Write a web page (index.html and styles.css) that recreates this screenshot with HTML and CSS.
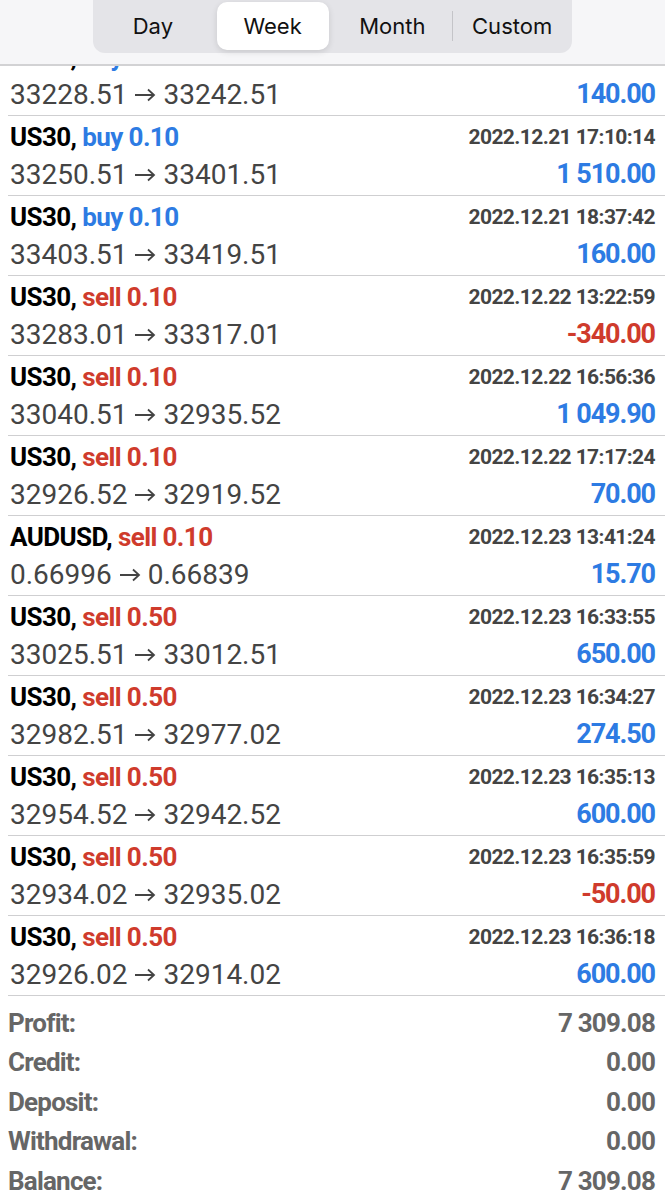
FILE: index.html
```html
<!DOCTYPE html>
<html lang="en">
<head>
    <meta charset="UTF-8">
    <meta name="viewport" content="width=device-width, initial-scale=1.0">
    <title>History</title>
    <link rel="stylesheet" href="styles.css">
</head>
<body>

    <div class="topbar">
        <div class="segments">
            <div class="seg">Day</div>
            <div class="seg active">Week</div>
            <div class="seg">Month</div>
            <div class="seg divided">Custom</div>
        </div>
    </div>

    <div class="deals" id="deals"></div>

    <div class="summary">
        <div class="sum-row"><span>Profit:</span><span>7 309.08</span></div>
        <div class="sum-row"><span>Credit:</span><span>0.00</span></div>
        <div class="sum-row"><span>Deposit:</span><span>0.00</span></div>
        <div class="sum-row"><span>Withdrawal:</span><span>0.00</span></div>
        <div class="sum-row"><span>Balance:</span><span>7 309.08</span></div>
    </div>

    <script>
        const deals = [
            ['US30', 'buy', '0.10', '2022.12.21 15:02:41', '33228.51', '33242.51', '140.00'],
            ['US30', 'buy', '0.10', '2022.12.21 17:10:14', '33250.51', '33401.51', '1 510.00'],
            ['US30', 'buy', '0.10', '2022.12.21 18:37:42', '33403.51', '33419.51', '160.00'],
            ['US30', 'sell', '0.10', '2022.12.22 13:22:59', '33283.01', '33317.01', '-340.00'],
            ['US30', 'sell', '0.10', '2022.12.22 16:56:36', '33040.51', '32935.52', '1 049.90'],
            ['US30', 'sell', '0.10', '2022.12.22 17:17:24', '32926.52', '32919.52', '70.00'],
            ['AUDUSD', 'sell', '0.10', '2022.12.23 13:41:24', '0.66996', '0.66839', '15.70'],
            ['US30', 'sell', '0.50', '2022.12.23 16:33:55', '33025.51', '33012.51', '650.00'],
            ['US30', 'sell', '0.50', '2022.12.23 16:34:27', '32982.51', '32977.02', '274.50'],
            ['US30', 'sell', '0.50', '2022.12.23 16:35:13', '32954.52', '32942.52', '600.00'],
            ['US30', 'sell', '0.50', '2022.12.23 16:35:59', '32934.02', '32935.02', '-50.00'],
            ['US30', 'sell', '0.50', '2022.12.23 16:36:18', '32926.02', '32914.02', '600.00']
        ];

        const arrow = '<svg class="arrow" width="22" height="14" viewBox="0 0 22 14">' +
            '<path d="M1 7 H20 M14 1.5 L20 7 L14 12.5" fill="none" stroke="#444" stroke-width="1.8"/></svg>';

        const list = document.getElementById('deals');
        list.innerHTML = deals.map(d => {
            const loss = d[6].startsWith('-') ? ' loss' : '';
            return `<div class="deal">
                <div class="line"><span class="sym">${d[0]}, <span class="${d[1]}">${d[1]} ${d[2]}</span></span><span class="time">${d[3]}</span></div>
                <div class="line"><span class="price">${d[4]} ${arrow} ${d[5]}</span><span class="amount${loss}">${d[6]}</span></div>
            </div>`;
        }).join('');
    </script>

</body>
</html>
```

FILE: styles.css
```css
body {
    margin: 0;
    background-color: #fff;
    font-family: 'Roboto', 'Liberation Sans', sans-serif;
    width: 665px;
    height: 1200px;
    overflow: hidden;
    position: relative;
}

/* header sits over the scrolled list */
.topbar {
    position: absolute;
    top: 0;
    left: 0;
    right: 0;
    height: 64px;
    background-color: #f6f6f8;
    border-bottom: 2px solid #d2d2d4;
    z-index: 2;
}

.segments {
    display: flex;
    width: 479px;
    height: 54px;
    margin: -1px 0 0 93px;
    padding: 3px 0;
    box-sizing: border-box;
    background-color: #e4e4e8;
    border-radius: 0 0 12px 12px;
}

.seg {
    flex: 1;
    display: flex;
    align-items: center;
    justify-content: center;
    margin: 0 4px;
    font-family: 'Inter', 'Liberation Sans', sans-serif;
    font-size: 22px;
    color: #111;
    border-radius: 10px;
    position: relative;
}

.seg.active {
    background-color: #fff;
    box-shadow: 0 2px 6px rgba(0, 0, 0, 0.12);
}

.seg.divided::before {
    content: '';
    position: absolute;
    left: -4px;
    top: 9px;
    bottom: 9px;
    width: 1px;
    background-color: #c4c4c8;
}

.deals {
    padding-top: 36px;
}

.deal {
    height: 80px;
    box-sizing: border-box;
    margin-left: 8px;
    padding: 1px 10px 0 2px;
    border-bottom: 1px solid #cfcfd1;
}

.line {
    display: flex;
    justify-content: space-between;
    align-items: center;
}

.line:first-child {
    height: 40px;
}

.line:last-child {
    height: 34px;
}

.sym {
    font-size: 26px;
    font-weight: 700;
    letter-spacing: -0.6px;
    color: #000;
}

.buy,
.amount {
    color: #2d7be3;
}

.sell,
.amount.loss {
    color: #cf3b2c;
}

.time {
    font-size: 21px;
    font-weight: 700;
    letter-spacing: -0.6px;
    color: #444;
}

.price {
    font-size: 28px;
    color: #444;
}

.arrow {
    vertical-align: 2px;
}

.amount {
    font-size: 27px;
    font-weight: 700;
    letter-spacing: -1.1px;
}

.summary {
    padding: 8px 10px 0 8px;
}

.sum-row {
    display: flex;
    justify-content: space-between;
    height: 39.4px;
    line-height: 39.4px;
    font-size: 26px;
    font-weight: 700;
    letter-spacing: -0.8px;
    color: #666;
}
```
